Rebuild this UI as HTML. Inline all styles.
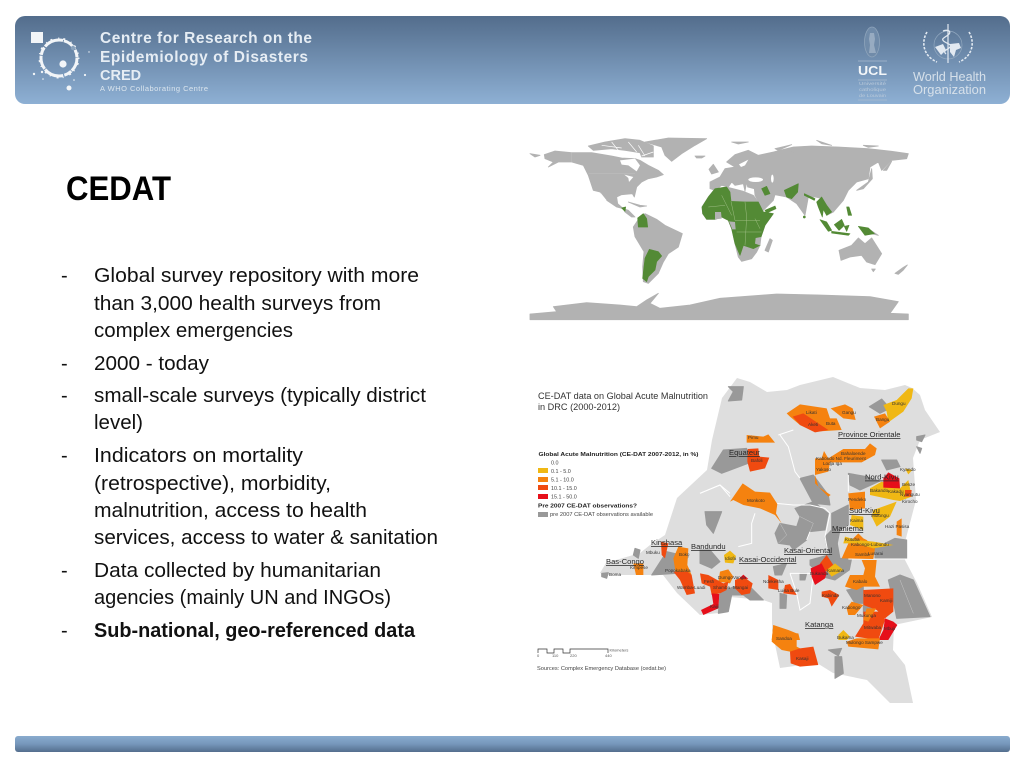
<!DOCTYPE html>
<html><head><meta charset="utf-8"><title>CEDAT</title>
<style>
html,body{margin:0;padding:0;background:#fff;width:1024px;height:768px;overflow:hidden}
svg{display:block;position:absolute;left:0;top:0}
text{font-family:"Liberation Sans",sans-serif}
.b text{font-size:20px;fill:#111}
.p text{font-size:7.6px;fill:#2a2a2a;text-decoration:underline}
.s text{font-size:4.6px;fill:#333}
.l text{font-size:5.4px;fill:#444}
.bl{filter:blur(.35px)}
.w path{fill:#b2b2b2;stroke:#b2b2b2;stroke-width:2.5;stroke-linejoin:round}
.g path,.g circle{fill:#538a35;stroke:#538a35;stroke-width:2;stroke-linejoin:round}
.d path{fill:#999;stroke:#999;stroke-width:3;stroke-linejoin:round}
</style></head><body>
<svg width="1024" height="768" viewBox="0 0 1024 768">
<defs>
<linearGradient id="h" x1="0" y1="0" x2="0" y2="1"><stop offset="0" stop-color="#536d8c"/><stop offset="1" stop-color="#8eb0d4"/></linearGradient>
<linearGradient id="f" x1="0" y1="0" x2="0" y2="1"><stop offset="0" stop-color="#89abce"/><stop offset=".5" stop-color="#7697bb"/><stop offset="1" stop-color="#546e8d"/></linearGradient>
</defs>
<rect x="15" y="16" width="995" height="88" rx="10" fill="url(#h)"/>
<rect x="15" y="736" width="995" height="16" rx="3" fill="url(#f)"/>

<!-- CRED logo -->
<rect x="31" y="32" width="12" height="11" fill="#f2f5f8"/>
<circle cx="59" cy="58" r="18" fill="none" stroke="#f2f5f8" stroke-width="3" stroke-dasharray="14 .8 8 1.2 20 .8"/>
<circle cx="59" cy="58" r="19.500" fill="none" stroke="#f2f5f8" stroke-width="2" stroke-dasharray="1 4 2 6"/>
<circle cx="63" cy="64" r="3.6" fill="#f2f5f8"/>
<circle cx="69" cy="88" r="2.5" fill="#f2f5f8"/>
<circle cx="34" cy="74" r="1.2" fill="#f2f5f8"/><circle cx="42" cy="72" r="1.2" fill="#f2f5f8"/><circle cx="85" cy="75" r="1.1" fill="#f2f5f8"/><circle cx="74" cy="80" r=".8" fill="#f2f5f8"/><circle cx="89" cy="52" r=".7" fill="#f2f5f8"/><circle cx="43" cy="79" r=".8" fill="#f2f5f8"/>
<circle cx="73" cy="48" r="2.200" fill="#8aa3bd"/>
<g fill="#e6edf4" font-weight="bold">
<text x="100" y="43" font-size="15.5" textLength="212">Centre for Research on the</text>
<text x="100" y="62" font-size="15.5" textLength="208">Epidemiology of Disasters</text>
<text x="100" y="80" font-size="14.5">CRED</text>
</g>
<text x="100" y="91" font-size="7.5" fill="#dbe5ee" textLength="108">A WHO Collaborating Centre</text>

<!-- UCL -->
<ellipse cx="872" cy="42" rx="7.5" ry="15" fill="#708ba9" stroke="#8ea4bb" stroke-width=".8"/>
<path d="M870 33h4l1 6-1 6 2 8h-7l1-8-1-6z" fill="#97abc1"/>
<path d="M858 61h29M858 80h29M858 100h29" stroke="#a9bccf" stroke-width=".7"/>
<text x="858" y="75" font-size="12.5" font-weight="bold" fill="#f3f6f9" textLength="29" lengthAdjust="spacingAndGlyphs">UCL</text>
<g font-size="4.6" fill="#b9c9da">
<text x="859" y="85" textLength="27" lengthAdjust="spacingAndGlyphs">Université</text>
<text x="859" y="91" textLength="27" lengthAdjust="spacingAndGlyphs">catholique</text>
<text x="859" y="97" textLength="27" lengthAdjust="spacingAndGlyphs">de Louvain</text>
</g>

<!-- WHO -->
<g fill="none" stroke="#e2e9f1">
<circle cx="948" cy="45" r="14" stroke-width=".7" stroke="#93a9c0"/>
<path d="M948 24v39" stroke-width="1.200"/>
<path d="M943 31c6-2 9 1 5 4s-8 4-3 7 8 3 4 6-6 3-3 6" stroke-width="1.300"/>
<path d="M927 32c-6 10-4 24 10 30M969 32c6 10 4 24-10 30" stroke-width="1.600" stroke-dasharray="2.500 1.400"/>
</g>
<path d="M935 47l8-3 3 6-5 5zM950 44l9-1 2 5-5 2-2 7-4-5z" fill="#e2e9f1"/>
<g font-size="13" fill="#d6e0ea">
<text x="913" y="81" textLength="73" lengthAdjust="spacingAndGlyphs">World Health</text>
<text x="913" y="94" textLength="73" lengthAdjust="spacingAndGlyphs">Organization</text>
</g>

<!-- Text -->
<text x="66" y="200" font-size="34" font-weight="bold" fill="#000" textLength="105" lengthAdjust="spacingAndGlyphs">CEDAT</text>
<g class="b">
<text x="61" y="282">-</text><text x="94" y="282" textLength="325" lengthAdjust="spacingAndGlyphs">Global survey repository with more</text>
<text x="94" y="310" textLength="287" lengthAdjust="spacingAndGlyphs">than 3,000 health surveys from</text>
<text x="94" y="337" textLength="199" lengthAdjust="spacingAndGlyphs">complex emergencies</text>
<text x="61" y="370">-</text><text x="94" y="370" textLength="115" lengthAdjust="spacingAndGlyphs">2000 - today</text>
<text x="61" y="402">-</text><text x="94" y="402" textLength="332" lengthAdjust="spacingAndGlyphs">small-scale surveys (typically district</text>
<text x="94" y="429" textLength="49" lengthAdjust="spacingAndGlyphs">level)</text>
<text x="61" y="462">-</text><text x="94" y="462" textLength="209" lengthAdjust="spacingAndGlyphs">Indicators on mortality</text>
<text x="94" y="490" textLength="237" lengthAdjust="spacingAndGlyphs">(retrospective), morbidity,</text>
<text x="94" y="517" textLength="273" lengthAdjust="spacingAndGlyphs">malnutrition, access to health</text>
<text x="94" y="544" textLength="344" lengthAdjust="spacingAndGlyphs">services, access to water &amp; sanitation</text>
<text x="61" y="577">-</text><text x="94" y="577" textLength="287" lengthAdjust="spacingAndGlyphs">Data collected by humanitarian</text>
<text x="94" y="604" textLength="297" lengthAdjust="spacingAndGlyphs">agencies (mainly UN and INGOs)</text>
<text x="61" y="637">-</text><text x="94" y="637" font-weight="bold" textLength="321" lengthAdjust="spacingAndGlyphs">Sub-national, geo-referenced data</text>
</g>

<g class="bl">
<!-- World map: west -->
<g transform="translate(525,132) scale(.33333)">
<g class="w">
<path d="M58,68L90,57L140,62L200,62L260,72L290,78L330,80L345,85L370,100L400,115L415,128L395,135L370,140L350,150L335,165L328,195L322,185L290,188L275,195L278,215L295,230L275,225L245,205L225,180L205,175L190,130L175,100L140,90L100,90L70,105L85,90L60,80Z"/>
<path d="M190,42L240,30L300,20L345,25L385,42L385,75L350,75L345,62L300,55L260,50L205,55Z"/>
<path d="M360,30L430,18L545,20L510,40L470,65L440,88L420,70L410,45Z"/>
<path d="M510,72L540,72L530,78L515,78Z"/>
<path d="M15,65L45,70L30,75Z"/>
<path d="M295,230L310,235L330,255L320,255L300,240Z"/>
<path d="M310,210L345,220L365,222L345,225Z"/>
<path d="M325,285L345,255L360,245L395,262L420,280L472,305L460,345L430,365L415,390L400,424L370,454L355,449L353,404L357,359L330,314Z"/>
<path d="M552,112L565,97L580,120L560,126Z"/>
</g>
<g fill="#fff">
<path d="M285,85L330,80L345,100L335,118L310,100L290,98Z"/>
<path d="M298,128L325,135L312,150L310,138Z"/>
<path d="M225,180L245,205L238,205Z"/>
</g>
<path d="M230,40L290,48M260,30L280,55M310,30L335,60M340,40L360,72M350,72L385,60" stroke="#fff" stroke-width="2" fill="none"/>
<path d="M190,125L330,125" stroke="#c4c4c4" stroke-width="1.200"/>
<path d="M140,62L140,90" stroke="#c4c4c4" stroke-width="1.200"/>
<g class="g">
<path d="M338,258L355,245L365,260L368,285L340,285Z"/>
<path d="M290,228L302,225L300,238Z"/>
</g>
</g>
<!-- World map: east -->
<g transform="translate(715,132) scale(.33333)">
<g class="w">
<path d="M-15,150L15,135L30,110L60,105L35,90L60,68L100,55L130,70L175,60L235,45L290,42L370,45L460,50L530,58L580,65L575,80L530,85L500,115L490,90L465,105L460,140L425,150L400,175L385,205L355,240L335,250L345,245L325,200L300,195L280,195L270,250L245,215L215,195L180,188L175,205L145,235L120,190L118,170L98,165L95,150L90,178L85,155L60,160L50,150L40,165L20,160L0,175L-15,170Z"/>
<path d="M-39,225L-20,195L0,170L35,165L85,178L115,190L130,210L145,240L175,245L150,280L138,315L135,340L125,360L110,380L80,388L70,375L60,335L50,290L40,265L20,255L0,262L-25,262L-37,245Z"/>
<path d="M165,320L172,325L160,360L150,355Z"/>
<path d="M425,175L460,150L470,110L472,140L445,170Z"/>
<path d="M505,115L530,88L515,115Z"/>
<path d="M225,55L250,45L240,65Z"/>
<path d="M50,30L100,30L70,36Z"/><path d="M180,50L230,38L190,55Z"/><path d="M305,25L350,40L320,35Z"/><path d="M445,40L490,42L460,46Z"/>
<path d="M460,290L490,310L470,305Z"/>
<path d="M372,355L410,340L430,318L450,335L470,318L500,365L480,398L455,390L440,370L405,375L378,385Z"/>
</g>
<g fill="#fff">
<ellipse cx="122" cy="143" rx="22" ry="7"/>
<ellipse cx="172" cy="140" rx="4" ry="12"/>
<path d="M72,97L100,83L90,100L78,105Z"/>
</g>
<g class="g">
<path d="M-39,225L-20,195L0,170L35,165L45,180L48,208L90,210L130,210L145,240L175,245L150,280L138,315L125,325L135,340L115,350L85,340L75,370L60,335L50,290L40,265L20,255L0,262L-25,262L-37,245Z"/>
<path d="M140,170L155,163L165,185L150,190Z"/>
<path d="M208,175L250,155L248,180L230,200L215,195Z"/>
<path d="M305,210L320,195L335,220L350,240L335,250L325,232L322,255L310,225Z"/>
<path d="M268,185L300,200L298,205L268,190Z"/>
<circle cx="268" cy="255" r="3"/>
<path d="M315,263L335,270L350,295L340,298Z"/>
<path d="M350,298L405,305L400,310L350,303Z"/>
<path d="M358,278L380,262L388,280L372,295Z"/>
<path d="M388,283L402,280L395,298Z"/>
<path d="M395,225L402,225L410,250L400,250Z"/>
<path d="M430,283L460,288L478,305L450,310Z"/>
<path d="M150,235L180,222L183,230L155,243Z"/>
</g>
<path d="M-20,225L30,220M20,190L50,250M48,208L60,265M90,210L95,255M60,265L135,265M95,255L90,340M65,300L140,300M120,260L135,290" stroke="#a8c48f" stroke-width="1.300" fill="none"/>
<path d="M0,240L18,240L20,260L0,262Z" fill="#b2b2b2"/>
<path d="M42,268L60,270L62,292L52,292Z" fill="#b2b2b2"/>
<path d="M122,318L138,315L135,340L120,335Z" fill="#b2b2b2"/>
</g>
<!-- World map: south -->
<g transform="translate(520,130) scale(.33333)">
<g class="g"><path d="M388,358L415,365L425,378L410,395L405,420L385,440L380,455L368,445L372,410L375,385Z"/></g>
<g class="w">
<path d="M1055,417L1066,417L1060,425Z"/>
<path d="M1125,430L1150,412L1162,405L1150,420L1135,433Z"/>
<path d="M30,552L110,545L100,530L200,518L300,525L350,530L380,510L415,490L390,520L420,535L510,525L600,505L770,492L900,495L1050,500L1135,515L1110,550L1165,552L1165,569L30,569Z"/>
</g>
</g>

<!-- DRC map base -->
<path fill="#dedede" d="M737,378L750,382L767,392L787,390L800,385L833,377L860,388L885,390L905,385L912,388L920,395L925,410L940,432L920,440L913,458L916,500L905,542L905,560L917,583L932,617L894,625L893,650L905,665L913,703L890,703L867,680L833,673L817,663L780,668L772,630L772,603L763,600L730,597L728,612L700,615L677,593L663,575L610,575L600,573L606,563L640,553L650,545L665,535L677,498L707,470L712,440L722,398Z"/>

<!-- North (zoom 700,375) -->
<g transform="translate(700,375) scale(.33333)">
<g class="d">
<path d="M35,280L70,225L140,220L145,265L65,295Z"/>
<path d="M85,35L130,35L125,75L85,78L100,50Z"/>
<path d="M508,95L545,72L570,100L540,115Z"/>
<path d="M445,295L500,305L540,318L480,345L450,330Z"/>
<path d="M300,310L340,300L385,360L390,390L340,385Z"/>
<path d="M545,255L590,255L600,275L560,285Z"/>
<path d="M650,185L675,180L665,200L650,195Z"/>
<path d="M650,215L665,220L660,235Z"/>
</g>
<path fill="none" stroke="#fff" stroke-width="3" d="M240,180L265,215L285,290L300,310M235,180L280,165M0,355L60,330L90,355M445,300L445,350"/>
<path fill="#f5820f" d="M260,115L300,88L380,100L390,130L410,130L425,165L345,170L300,150L270,125Z"/>
<path fill="#f04a10" d="M278,125L310,115L355,145L385,165L345,172L300,150Z"/>
<path fill="#f5820f" d="M392,100L435,88L458,100L467,135L430,130Z"/>
<path fill="#f5820f" d="M140,180L190,185L205,178L225,203L140,203Z"/>
<path fill="#f04a10" d="M143,222L175,220L178,245L208,248L195,280L150,290L142,260Z"/>
<path fill="#f5820f" d="M345,250L365,250L372,228L385,250L430,222L495,222L510,205L530,220L525,240L485,262L390,262L385,290L345,300L355,335L392,360L385,365L345,325Z"/>
<path fill="#f0b814" d="M550,90L590,75L625,40L640,40L635,70L610,110L565,142L560,110Z"/>
<path fill="#f5820f" d="M522,125L555,115L570,140L540,160Z"/>
<path fill="#f0b814" d="M510,340L545,320L600,340L625,315L635,365L600,378L580,375L510,360Z"/>
<path fill="#e60f1a" d="M550,310L565,292L598,310L600,340L550,338Z"/>
<path fill="#f04a10" d="M615,345L635,345L633,365L615,365Z"/>
<path fill="#f0b814" d="M615,280L637,285L625,298Z"/>
</g>

<!-- Centre (zoom 700,480) -->
<g transform="translate(700,480) scale(.33333)">
<g class="d">
<path d="M285,85L340,65L385,100L375,150L330,155L320,180L280,210L270,195L235,190L225,160L240,130L290,140L300,110Z"/>
<path d="M395,100L445,75L445,135L420,150L410,200L385,230L375,170L395,150Z"/>
<path d="M330,240L385,225L390,175L410,180L420,235L455,235L448,270L405,300L365,290L330,255Z"/>
<path d="M525,205L585,175L620,180L620,235L525,237Z"/>
<path d="M565,300L600,285L640,300L690,410L590,415L580,365Z"/>
<path d="M440,330L490,320L490,370L465,370Z"/>
<path d="M490,375L525,375L510,395L490,400Z"/>
<path d="M15,95L65,95L40,160L20,135Z"/>
<path d="M0,210L30,210L60,245L35,265L0,250Z"/>
<path d="M100,320L150,320L190,360L150,360L130,345L95,345L85,395L55,400L60,340Z"/>
<path d="M220,260L260,250L245,285L225,285Z"/>
<path d="M240,340L260,345L258,385L240,385Z"/>
<path d="M300,280L320,280L315,300L300,300Z"/>
</g>
<path fill="none" stroke="#fff" stroke-width="3" d="M0,40L60,15L90,50M165,100L155,130L155,190L115,200M230,70L280,75L330,75L375,85L390,100M390,100L375,170L385,225M445,237L630,237M270,280L340,280L330,370L300,390L290,340L270,280M330,155L320,180"/>
<path fill="none" stroke="#c6c6c6" stroke-width="1.500" d="M300,110L340,130L330,155M240,130L260,165L235,190M600,300L640,400"/>
<path fill="#f5820f" d="M90,65L128,10L165,35L210,38L232,72L228,100L245,130L225,105L180,85L130,75L100,60Z"/>
<path fill="#f0b814" d="M72,225L90,212L108,228L100,250L75,248Z"/>
<path fill="#f5820f" d="M60,275L85,268L100,290L90,310L55,305Z"/>
<path fill="#f04a10" d="M0,280L25,285L70,310L85,305L80,330L60,340L35,345L30,320L5,310Z"/>
<path fill="#e60f1a" d="M35,340L58,342L55,385L10,405L3,390L40,372Z"/>
<path fill="#f04a10" d="M105,300L130,290L158,310L150,340L125,345L105,325Z"/>
<path fill="#e60f1a" d="M118,295L130,284L145,297Z"/>
<path fill="#f04a10" d="M205,285L235,300L235,330L205,325Z"/>
<path fill="#f04a10" d="M255,315L270,312L290,345L250,340Z"/>
<path fill="#f04a10" d="M360,250L380,225L400,255L385,275L360,270Z"/>
<path fill="#e60f1a" d="M332,265L365,250L380,280L375,295L345,315L335,290Z"/>
<path fill="#f0b814" d="M380,270L405,250L430,270L395,290Z"/>
<path fill="#f04a10" d="M365,335L390,330L418,345L395,380L385,355L365,350Z"/>
<path fill="#f5820f" d="M485,240L530,240L525,290L540,320L490,320L470,330L435,320L450,285L490,285L495,265Z"/>
<path fill="#f04a10" d="M490,330L580,325L580,395L555,415L530,390L490,375Z"/>
<path fill="#f5820f" d="M440,385L455,365L490,375L465,405L445,405Z"/>
<path fill="#f04a10" d="M490,395L550,395L555,420L535,480L465,470L490,430Z"/>
<path fill="#f5820f" d="M500,385L528,385L505,425L490,420Z"/>
<path fill="#e60f1a" d="M555,415L580,425L592,435L565,480L535,480L550,450Z"/>
<path fill="#f5820f" d="M220,435L255,460L295,460L300,480L215,480Z"/>
<path fill="#f0b814" d="M415,465L430,450L450,470L440,480L415,480Z"/>
<path fill="#f5820f" d="M425,235L445,190L475,160L490,175L500,180L525,205L520,237Z"/>
<path fill="#f0b814" d="M435,170L470,180L520,185L580,195L520,205L470,190L430,190Z"/>
<path fill="#f5820f" d="M445,40L495,35L495,85L450,90Z"/>
<path fill="#f0b814" d="M455,105L490,110L490,150L450,135Z"/>
<path fill="#f0b814" d="M520,90L590,65L570,110L530,140L515,110Z"/>
<path fill="#f5820f" d="M590,125L605,115L605,170L590,165Z"/>
</g>

<!-- West/south (zoom 600,530) -->
<g transform="translate(600,530) scale(.33333)">
<g class="d">
<path d="M155,135L200,65L265,80L230,130Z"/>
<path d="M105,55L120,60L115,85L100,75Z"/>
<path d="M5,130L25,128L20,145L5,140Z"/>
<path d="M685,360L725,355L715,378Z"/>
<path d="M705,380L725,380L730,430L705,445Z"/>
</g>
<path fill="#f04a10" d="M183,35L205,40L195,85L185,75Z"/>
<path fill="#f5820f" d="M220,85L235,50L265,55L262,105L275,135L228,135Z"/>
<path fill="#f04a10" d="M220,125L262,125L275,135L285,190L260,195L240,150Z"/>
<path fill="#f5820f" d="M100,100L130,100L130,135L108,135Z"/>
<path fill="#f5820f" d="M520,285L565,300L590,310L590,350L610,360L570,365L545,360L515,335Z"/>
<path fill="#f04a10" d="M570,365L600,355L640,350L655,405L600,410L572,400Z"/>
<path fill="#f5820f" d="M740,335L770,325L840,325L835,358L745,350Z"/>
</g>
</g>

<!-- Legend -->
<text x="538" y="399" font-size="9" fill="#333" textLength="170" lengthAdjust="spacingAndGlyphs">CE-DAT data on Global Acute Malnutrition</text>
<text x="538" y="410" font-size="9" fill="#333" textLength="82" lengthAdjust="spacingAndGlyphs">in DRC (2000-2012)</text>
<text x="538.500" y="456" font-size="5.6" font-weight="bold" fill="#222" textLength="160" lengthAdjust="spacingAndGlyphs">Global Acute Malnutrition (CE-DAT 2007-2012, in %)</text>
<g class="l">
<text x="551" y="464.500">0.0</text><text x="551" y="473">0.1 - 5.0</text><text x="551" y="481.500">5.1 - 10.0</text><text x="551" y="490">10.1 - 15.0</text><text x="551" y="498.500">15.1 - 50.0</text>
<text x="550" y="516" font-size="5" textLength="103" lengthAdjust="spacingAndGlyphs">pre 2007 CE-DAT observations available</text>
</g>
<rect x="538" y="468" width="10" height="5" fill="#f0b814"/><rect x="538" y="477" width="10" height="5" fill="#f5820f"/><rect x="538" y="485" width="10" height="5" fill="#f04a10"/><rect x="538" y="494" width="10" height="5" fill="#e60f1a"/><rect x="538" y="512" width="10" height="5" fill="#999"/>
<text x="538" y="507.500" font-size="5.6" font-weight="bold" fill="#222" textLength="99" lengthAdjust="spacingAndGlyphs">Pre 2007 CE-DAT observations?</text>
<path d="M538 653v-4h9v4h7v-4h9v4h7v-4h38v4" fill="none" stroke="#333" stroke-width=".7"/>
<g font-size="4" fill="#555"><text x="609.500" y="651.500">Kilometers</text><text x="537" y="657">0</text><text x="552" y="657">110</text><text x="570" y="657">220</text><text x="605" y="657">440</text></g>
<text x="537" y="670" font-size="5.4" fill="#444" textLength="129" lengthAdjust="spacingAndGlyphs">Sources: Complex Emergency Database (cedat.be)</text>

<!-- Province labels -->
<g class="p">
<text x="838" y="437">Province Orientale</text>
<text x="729" y="455">Equateur</text>
<text x="865" y="479.500">Nord-Kivu</text>
<text x="849" y="513">Sud-Kivu</text>
<text x="832" y="531">Maniema</text>
<text x="651" y="545">Kinshasa</text>
<text x="691" y="549">Bandundu</text>
<text x="784" y="553">Kasai-Oriental</text>
<text x="739" y="562">Kasai-Occidental</text>
<text x="606" y="564">Bas-Congo</text>
<text x="805" y="627">Katanga</text>
</g>
<g class="s">
<text x="806" y="414">Likati</text><text x="842" y="414">Gangu</text><text x="808" y="426">Aketi</text><text x="826" y="425">Buta</text><text x="892" y="405">Dungu</text><text x="876" y="421">Bangu</text>
<text x="748" y="439">Pimu</text><text x="751" y="462">Bafoli</text><text x="747" y="502">Monkoto</text>
<text x="841" y="455">Bahaloende</text><text x="816" y="460">Kabondo Nd. Fleuriment</text><text x="823" y="465">Lodja Iga</text><text x="816" y="471">Yakoso</text>
<text x="848" y="501">Pendeko</text><text x="870" y="492">Bakando</text><text x="888" y="493">Kakadu</text><text x="902" y="486">Benze</text><text x="900" y="496">Nyangutu</text><text x="902" y="503">Kirocho</text>
<text x="850" y="522">Kaima</text><text x="871" y="517">Mulungu</text><text x="885" y="528">Hazi Pasisa</text><text x="900" y="471">Kyando</text>
<text x="845" y="541">Kutuba</text><text x="851" y="546">Kabongo-Lubundu</text><text x="855" y="556">Samba</text><text x="868" y="555">Lusarai</text>
<text x="646" y="554">Mbuku</text>
<text x="679" y="556">Boko</text><text x="665" y="572">Popokabaka</text><text x="677" y="589">Wamba-Luadi</text><text x="704" y="583">Fesh</text><text x="713" y="589">Shamba</text><text x="718" y="579">Dumgo</text><text x="733" y="579">Vanga</text><text x="733" y="589">Mangai</text>
<text x="725" y="560">Idiofa</text><text x="609" y="576">Boma</text><text x="630" y="569">Kimpese</text>
<text x="763" y="583">Ndekesha</text><text x="778" y="592">Luisa Bule</text><text x="822" y="597">Kabinda</text>
<text x="827" y="572">Kamana</text><text x="810" y="575">Bukanda</text><text x="853" y="583">Kabalo</text><text x="864" y="597">Manono</text><text x="880" y="602">Kamiji</text>
<text x="842" y="609">Kabongo</text><text x="857" y="617">Mukunga</text><text x="864" y="629">Mitwaba</text><text x="884" y="630">Mbuji</text><text x="837" y="639">Bukama</text><text x="846" y="644">Mulongo Sampwe</text><text x="776" y="640">Sandoa</text><text x="796" y="660">Kasaji</text><text x="710" y="608">Kaiji</text>
</g>
</svg>
</body></html>
